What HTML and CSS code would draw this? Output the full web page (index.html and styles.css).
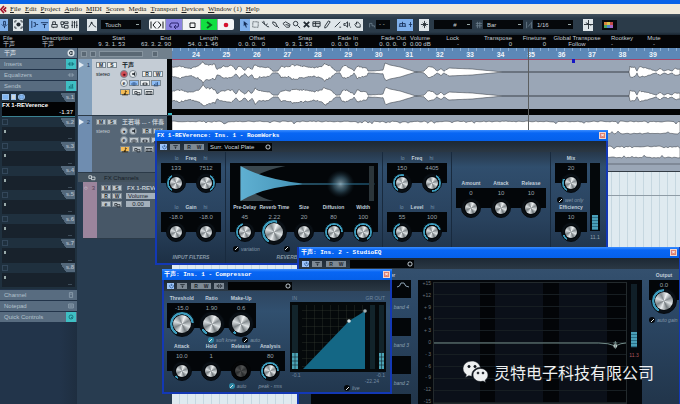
FILE: index.html
```html
<!DOCTYPE html>
<html lang="zh-CN">
<head>
	<meta charset="utf-8">
	<title>Project</title>
	<link rel="stylesheet" href="styles.css">
</head>
<body>
	<svg class="defs" aria-hidden="true">
		<symbol id="i-power" viewBox="0 0 10 8"><path d="M3.5 2.2a2.4 2.4 0 1 0 3 0M5 1v3"/></symbol>
		<symbol id="i-bypass" viewBox="0 0 10 8"><path d="M2 2h6M3.5 4h3M5 4v2.500"/></symbol>
		<symbol id="i-eq" viewBox="0 0 10 8"><path d="M1 4h8M3 2.500h4M3 5.500h4"/></symbol>
		<symbol id="i-bars" viewBox="0 0 10 8"><path d="M2 6.500h6M3 6V4M5 6V2M7 6V1.500"/></symbol>
		<symbol id="i-env" viewBox="0 0 10 8"><path d="M1 4h8M4 1.500L2.500 4 4 6.500M6 1.500L7.500 4 6 6.500"/></symbol>
		<symbol id="i-folder" viewBox="0 0 10 8"><path d="M2 2h3v1.500h4v3H5V3.500M2 2v3h3"/></symbol>
		<symbol id="i-keys" viewBox="0 0 10 8"><path d="M1 2h8v4H1zM3.500 2v4M6.500 2v4"/></symbol>
		<symbol id="i-note" viewBox="0 0 10 8"><path d="M5.500 1v5M5.500 1l2 1.500M1 6.500h8"/><circle cx="4.500" cy="5.500" r="1.200" class="solid"/></symbol>
		<symbol id="i-speaker" viewBox="0 0 10 8"><path class="solid" d="M2.500 3h2l2-2v6l-2-2h-2z"/></symbol>
	</svg>

	<div class="app_title"></div>
	<nav class="menu">
		<svg class="logo" viewBox="0 0 8 8"><path d="M4.500 0L1 4l3.500 4M7 1.500L4.500 4 7 6.500" /></svg>
		<a href="#"><u>F</u>ile</a><a href="#"><u>E</u>dit</a><a href="#"><u>P</u>roject</a><a href="#"><u>A</u>udio</a><a href="#"><u>M</u>IDI</a><a href="#"><u>S</u>cores</a><a href="#">M<u>e</u>dia</a><a href="#"><u>T</u>ransport</a><a href="#"><u>D</u>evices</a><a href="#"><u>W</u>indow (1)</a><a href="#"><u>H</u>elp</a>
	</nav>

	<div class="toolbar">
		<div class="group"><button class="tool on narrow" aria-label="Activate"><svg viewBox="0 0 10 10"><path d="M4 1.500h2v4H4zM2 5q3 4 6 0M5 7v2"/></svg></button></div>
		<div class="group"><button class="tool" aria-label="Constrain"><svg viewBox="0 0 10 10"><path d="M3 1H1v2M7 1h2v2M3 9H1V7M7 9h2V7"/><circle class="solid" cx="5" cy="5" r="2.300"/></svg></button></div>
		<div class="group">
			<button class="tool on" aria-label="Inspector"><svg viewBox="0 0 10 10"><path d="M2 1v8M4 3h2v4H4M7 5h2"/></svg></button>
			<button class="tool on" aria-label="Info line"><svg viewBox="0 0 10 10"><path d="M1 3h8M3 5h4M5 5v4"/></svg></button>
			<button class="tool" aria-label="Overview"><svg viewBox="0 0 10 10"><path d="M3 5V2h3v3M2 5h6v3H2zM4 8v1"/></svg></button>
			<button class="tool" aria-label="Pool"><svg viewBox="0 0 10 10"><path d="M1 2h3v3H1zM5 2h4v2H5zM5 6h4v3H5zM2 5v3h3"/></svg></button>
			<button class="tool" aria-label="Mixer"><svg viewBox="0 0 10 10"><path d="M2.500 1v8M5 1v8M7.500 1v8M1.500 6h2M4 3h2M6.500 6h2"/></svg></button>
		</div>
		<div class="group"><button class="tool" aria-label="Automation"><svg viewBox="0 0 10 10"><path d="M1 8l3-5 2 3 3 2"/><circle class="solid" cx="4" cy="3" r="1"/></svg></button></div>
		<div class="group"><select class="picker touch" aria-label="Automation mode"><option>Touch</option></select></div>
		<div class="group transport">
			<button class="key" aria-label="Locators"><svg viewBox="0 0 16 10"><path d="M2 1.500v7M7 1.500L4 5l3 3.500M9 1.500L12 5 9 8.500M14 1.500v7"/></svg></button>
			<button class="key cycle" aria-label="Cycle"><svg viewBox="0 0 16 10"><path d="M6 7H4q-1-2 1-4h7q1 2 0 4H8M10 5L8 7l2 2"/></svg></button>
			<button class="key" aria-label="Stop"><svg viewBox="0 0 16 10"><path d="M6 3h5v4.500H6z"/></svg></button>
			<button class="key play" aria-label="Play"><svg viewBox="0 0 16 10"><path d="M6 2l4 3-4 3"/></svg></button>
			<button class="key rec" aria-label="Record"><svg viewBox="0 0 16 10"><circle cx="8" cy="5" r="2.300"/></svg></button>
		</div>
		<div class="group tools">
			<button class="tool on" aria-label="Select"><svg viewBox="0 0 10 10"><path class="solid" d="M3 1l5 4H5.500l1 3-1 .5-1.200-3L3 7z"/></svg></button>
			<button class="tool" aria-label="Range"><svg viewBox="0 0 10 10"><path stroke-dasharray="1 1" d="M2 2h6v6H2z"/></svg></button>
			<button class="tool" aria-label="Split"><svg viewBox="0 0 10 10"><path d="M1 2l7 6M3 1l1 4M6 6l1-2M8 7l1 1"/></svg></button>
			<button class="tool" aria-label="Glue"><svg viewBox="0 0 10 10"><path d="M2 2l3 1 2 4H5L2 4zM7 7l2 2"/></svg></button>
			<button class="tool" aria-label="Erase"><svg viewBox="0 0 10 10"><path d="M1 4l3-2 5 3-1 3H5zM4 5l4 1"/></svg></button>
			<button class="tool" aria-label="Zoom"><svg viewBox="0 0 10 10"><circle cx="4" cy="4" r="2.500"/><path d="M6 6l3 3"/></svg></button>
			<button class="tool" aria-label="Mute"><svg viewBox="0 0 10 10"><path class="thick" d="M2 2l6 6M8 2L2 8"/></svg></button>
			<button class="tool" aria-label="Time warp"><svg viewBox="0 0 10 10"><path d="M1 2h8v5H1zM1 4h8M4 2v5M7 7v2"/></svg></button>
			<button class="tool" aria-label="Draw"><svg viewBox="0 0 10 10"><path d="M6 1l2 1-4 6-2 1V7z"/></svg></button>
			<button class="tool" aria-label="Line"><svg viewBox="0 0 10 10"><path d="M2 8l6-6M7 8h2"/></svg></button>
			<button class="tool" aria-label="Play tool"><svg viewBox="0 0 10 10"><path d="M1 4h2l2-2v6L3 6H1zM7 3v4M8 8h1"/></svg></button>
			<button class="tool" aria-label="Color"><svg viewBox="0 0 10 10"><path d="M2 5l3-3 3 3v3H4zM4 2v3"/></svg></button>
		</div>
		<div class="group"><svg class="dim" viewBox="0 0 10 10"><path d="M2 8V3h3v3h3v2"/></svg><span class="readout">- -</span></div>
		<div class="group"><button class="tool on" aria-label="Autoscroll"><svg viewBox="0 0 10 10"><path d="M1 7h8M5 2v5M2 4h6v3M2 4v3"/></svg></button><button class="tool on half" aria-label="Suspend"><svg viewBox="0 0 6 10"><path d="M3 2v6M1 5h4"/></svg></button></div>
		<div class="group"><button class="tool" aria-label="Snap zero"><svg viewBox="0 0 10 10"><path d="M5 1v8M1 5h8M3 3l4 4M7 3L3 7"/></svg></button></div>
		<div class="group"><select class="picker snap" aria-label="Snap type"><option>#</option></select></div>
		<div class="group"><svg class="dim" viewBox="0 0 10 10"><path d="M1 3h8M1 6h8M3 1v8M6 1v8"/></svg><select class="picker" aria-label="Grid type"><option>Bar</option></select></div>
		<div class="group"><svg class="dim" viewBox="0 0 10 10"><path d="M2 1v8M8 1v8M4 7l3-4"/></svg><select class="picker" aria-label="Quantize"><option>1/16</option></select></div>
		<div class="group"><button class="tool" aria-label="Quantize on"><svg viewBox="0 0 10 10"><path d="M5 0v10M0 5h10M2 3l6 3"/></svg></button></div>
		<div class="group"><span class="swatches"><i></i><i></i><i></i><i></i><i></i><i></i></span></div>
	</div>

	<div class="info">
		<div class="left">File<br>干声</div><div class="left">Description<br>干声</div>
		<div>Start<br>9. 3. 1. 53</div><div>End<br>63. 3. 2. 90</div><div>Length<br>54. 0. 1. 46</div>
		<div>Offset<br>0. 0. 0. &nbsp; 0</div><div>Snap<br>9. 3. 1. 53</div><div>Fade In<br>0. 0. 0. &nbsp; 0</div><div>Fade Out<br>0. 0. 0. &nbsp; 0</div>
		<div class="left">Volume<br>0.00 dB</div><div>Lock<br>-</div><div>Transpose<br>0</div><div>Finetune<br>0</div>
		<div class="mid">Global Transpose<br>Follow</div><div class="left">Rootkey<br>-</div><div class="mid">Mute<br>-</div>
	</div>

	<main class="work">
		<aside class="inspector">
			<div class="row head"><span>干声</span><svg viewBox="0 0 8 8"><circle cx="4" cy="4" r="3.500" class="disc"/><path d="M5.500 2.500q-3-1-3 1.500t3 1.500M4 4h2"/></svg></div>
			<div class="row"><span>Inserts</span><svg class="lit" viewBox="0 0 10 8"><use href="#i-env"/></svg></div>
			<div class="row"><span>Equalizers</span><svg viewBox="0 0 10 8"><use href="#i-env"/></svg></div>
			<div class="row"><span>Sends</span><svg class="lit" viewBox="0 0 10 8"><use href="#i-bars"/></svg></div>
			<div class="sends">
				<div class="slot used"><div class="bar"><span class="chips"><i></i><i></i><i></i></span><em>s.1</em></div><div class="box"><b>FX 1-REVerence</b><span>-1.37</span></div></div>
				<div class="slot"><div class="bar"><i></i><em>s.2</em></div><div class="box"></div></div>
				<div class="slot"><div class="bar"><i></i><em>s.3</em></div><div class="box"></div></div>
				<div class="slot"><div class="bar"><i></i><em>s.4</em></div><div class="box"></div></div>
				<div class="slot"><div class="bar"><i></i><em>s.5</em></div><div class="box"></div></div>
				<div class="slot"><div class="bar"><i></i><em>s.6</em></div><div class="box"></div></div>
				<div class="slot"><div class="bar"><i></i><em>s.7</em></div><div class="box"></div></div>
				<div class="slot"><div class="bar"><i></i><em>s.8</em></div><div class="box"></div></div>
			</div>
			<div class="row"><span>Channel</span><svg viewBox="0 0 10 8"><path d="M3 1h4v6H3zM4 3h2"/></svg></div>
			<div class="row"><span>Notepad</span><svg viewBox="0 0 10 8"><path d="M2 1.500h6v5H2zM3 3h4M3 5h4"/></svg></div>
			<div class="row"><span>Quick Controls</span><svg class="lit" viewBox="0 0 10 8"><circle cx="5" cy="4" r="2.500"/><path d="M5 4l2 2"/></svg></div>
		</aside>

		<section class="tracks">
			<div class="list_head"><i></i><i></i><i class="wide"></i><i></i></div>
			<div class="track selected">
				<div class="strip"><span class="arrow"></span>1</div>
				<div class="panel">
					<div class="line"><button>M</button><button>S</button><b>干声</b></div>
					<div class="line"><small>stereo</small><button class="round red" aria-label="Record">●</button><button class="round" aria-label="Monitor"><svg viewBox="0 0 10 8"><use href="#i-speaker"/></svg></button><button class="push">R</button><button>W</button></div>
					<div class="line in"><button class="round">e</button><button class="blue" aria-label="Inserts"><svg viewBox="0 0 10 8"><use href="#i-eq"/></svg></button><button aria-label="EQ"><svg viewBox="0 0 10 8"><use href="#i-env"/></svg></button><button class="blue" aria-label="Sends"><svg viewBox="0 0 10 8"><use href="#i-bars"/></svg></button></div>
					<div class="line in spaced"><button class="gold" aria-label="Time base"><svg viewBox="0 0 10 8"><use href="#i-note"/></svg></button><button aria-label="Lock"><svg viewBox="0 0 10 8"><use href="#i-folder"/></svg></button><button aria-label="Lanes"><svg viewBox="0 0 10 8"><use href="#i-keys"/></svg></button></div>
				</div>
				<div class="meter"></div>
			</div>
			<div class="track">
				<div class="strip"><span class="arrow"></span>2</div>
				<div class="panel">
					<div class="line"><button>M</button><button>S</button><b>王若琳 ... - 伴奏</b></div>
					<div class="line"><small>stereo</small><button class="round" aria-label="Record">●</button><button class="round" aria-label="Monitor"><svg viewBox="0 0 10 8"><use href="#i-speaker"/></svg></button><button class="push">R</button><button>W</button></div>
					<div class="line in"><button class="round">e</button><button aria-label="Inserts"><svg viewBox="0 0 10 8"><use href="#i-eq"/></svg></button><button aria-label="EQ"><svg viewBox="0 0 10 8"><use href="#i-env"/></svg></button><button aria-label="Sends"><svg viewBox="0 0 10 8"><use href="#i-bars"/></svg></button></div>
					<div class="line in spaced"><button class="gold" aria-label="Time base"><svg viewBox="0 0 10 8"><use href="#i-note"/></svg></button><button aria-label="Lock"><svg viewBox="0 0 10 8"><use href="#i-folder"/></svg></button><button aria-label="Lanes"><svg viewBox="0 0 10 8"><use href="#i-keys"/></svg></button></div>
				</div>
				<div class="meter"></div>
			</div>
			<div class="folder"><svg viewBox="0 0 10 8"><use href="#i-folder"/></svg>FX Channels</div>
			<div class="track fx">
				<div class="strip"><span>○</span>3</div>
				<div class="panel">
					<div class="line"><button>M</button><button>S</button><b>FX 1-REVerence</b></div>
					<div class="line"><button>R</button><button>W</button><span class="field">Volume</span></div>
					<div class="line"><button>e</button><button aria-label="Lock"><svg viewBox="0 0 10 8"><use href="#i-folder"/></svg></button><span class="field short">0.00</span></div>
				</div>
			</div>
		</section>

		<section class="arrange">
			<div class="ruler"><span>24</span><span>25</span><span>26</span><span>27</span><span>28</span><span>29</span><span>30</span><span>31</span><span>32</span><span>33</span><span>34</span><span>35</span><span>36</span><span>37</span><span>38</span><span>39</span></div>
			<div class="lane"><svg id="wave1" viewBox="0 0 508 49"></svg></div>
			<div class="lane second"><svg id="wave2" viewBox="0 0 508 57"></svg></div>
			<div class="empty"></div>
			<div class="cursor"></div>
			<div class="marker"></div>
		</section>
	</main>

	<section class="window room">
		<header>FX 1-REVerence: Ins. 1 - RoomWorks<button class="close" aria-label="Close">×</button></header>
		<div class="plugbar"><button class="on" aria-label="Power"><svg viewBox="0 0 10 8"><use href="#i-power"/></svg></button><button aria-label="Bypass"><svg viewBox="0 0 10 8"><use href="#i-bypass"/></svg></button><span class="rw"><button>R</button><button>W</button></span><select class="preset" aria-label="Preset"><option>Surr. Vocal Plate</option></select></div>
		<div class="room_body">
			<div class="col">
				<div class="caption"><span>lo</span><b>Freq</b><span>hi</span></div>
				<div class="bank bare"><label class="cell"><output>133</output><input type="range" class="knob" value="40" aria-label="Low freq"></label><label class="cell"><output>7512</output><input type="range" class="knob rev" value="40" aria-label="High freq"></label></div>
				<div class="caption low"><span>lo</span><b>Gain</b><span>hi</span></div>
				<div class="bank bare"><label class="cell"><output>-18.0</output><input type="range" class="knob" value="0" aria-label="Low gain"></label><label class="cell"><output>-18.0</output><input type="range" class="knob" value="0" aria-label="High gain"></label></div>
				<div class="foot">INPUT FILTERS</div>
			</div>
			<div class="col reverb">
				<div class="black">
					<svg class="decay" viewBox="0 0 147 41">
						<defs>
							<linearGradient id="dg"><stop offset="0" stop-color="#5fb0d2"/><stop offset="1" stop-color="#256f94"/></linearGradient>
							<radialGradient id="glow"><stop offset="0" stop-color="#9dbac8" stop-opacity=".8"/><stop offset=".5" stop-color="#4f7a90" stop-opacity=".5"/><stop offset="1" stop-color="#1c3542" stop-opacity="0"/></radialGradient>
						</defs>
						<path fill="#3a474e" d="M10 3h45Q28 8 13 21q10 12 30 17H10z"/>
						<path fill="url(#dg)" d="M10 3Q32 16 72 20.500h72v1H72Q32 24 10 38z"/>
						<circle cx="110" cy="21" r="14" fill="url(#glow)"/>
						<path stroke="#2b353a" stroke-width="5" d="M141 3v35"/>
					</svg>
					<div class="bank clear"><label class="cell"><b>Pre-Delay</b><output>45</output><input type="range" class="knob" value="45"></label><label class="cell"><b>Reverb Time</b><output>2.22</output><input type="range" class="knob big" value="55"></label><label class="cell"><b>Size</b><output>20</output><input type="range" class="knob" value="0"></label><label class="cell"><b>Diffusion</b><output>80</output><input type="range" class="knob" value="80"></label><label class="cell"><b>Width</b><output>100</output><input type="range" class="knob" value="100"></label></div>
				</div>
				<div class="checks"><label><input type="checkbox">variation</label><input type="checkbox" aria-label="Hold"></div>
				<div class="foot">REVERB</div>
			</div>
			<div class="col">
				<div class="caption"><span>lo</span><b>Freq</b><span>hi</span></div>
				<div class="bank bare"><label class="cell"><output>150</output><input type="range" class="knob" value="55" aria-label="Low freq"></label><label class="cell"><output>4405</output><input type="range" class="knob rev" value="50" aria-label="High freq"></label></div>
				<div class="caption low"><span>lo</span><b>Level</b><span>hi</span></div>
				<div class="bank bare"><label class="cell"><output>55</output><input type="range" class="knob" value="45" aria-label="Low level"></label><label class="cell"><output>100</output><input type="range" class="knob" value="75" aria-label="High level"></label></div>
			</div>
			<div class="col gate">
				<div class="bank"><label class="cell"><b>Amount</b><output>0</output><input type="range" class="knob" value="0"></label><label class="cell"><b>Attack</b><output>10</output><input type="range" class="knob" value="0"></label><label class="cell"><b>Release</b><output>10</output><input type="range" class="knob" value="0"></label></div>
			</div>
			<div class="col out">
				<div>
					<div class="bank"><label class="cell"><b>Mix</b><output>20</output><input type="range" class="knob" value="30"></label></div>
					<div class="checks wet"><label><input type="checkbox">wet only</label></div>
					<div class="bank"><label class="cell"><b>Efficiency</b><output>10</output><input type="range" class="knob" value="12"></label></div>
				</div>
				<div class="level"><span class="tube"><i></i></span>11.1</div>
			</div>
		</div>
	</section>

	<section class="window studio">
		<header>干声: Ins. 2 - StudioEQ<button class="close" aria-label="Close">×</button></header>
		<div class="plugbar"><button class="on" aria-label="Power"><svg viewBox="0 0 10 8"><use href="#i-power"/></svg></button><button aria-label="Bypass"><svg viewBox="0 0 10 8"><use href="#i-bypass"/></svg></button><span class="rw"><button>R</button><button>W</button></span><select class="preset" aria-label="Preset"><option></option></select></div>
		<div class="eq_body">
			<div class="bands"><b>Filter</b>
				<div class="band"><svg viewBox="0 0 12 6"><path d="M0 5q3 0 4-4h3q1 4 5 4"/></svg><span>band 4</span></div>
				<div class="band"><span>band 3</span></div>
				<div class="band"><span>band 2</span></div>
				<div class="band wide"></div>
			</div>
			<div class="graph">
				<div class="scale"><span>+15</span><span>+12</span><span>+ 9</span><span>+ 6</span><span>+ 3</span><span>0</span><span>- 3</span><span>- 6</span><span>- 9</span><span>-12</span><span>-15</span></div>
				<div class="plot"><svg viewBox="0 0 198 20"><path d="M0 10h170q10 0 17 3 6-3 11-3" /><circle cx="187" cy="13" r="2"/><path d="M185 10h4M187 8v8"/></svg></div>
				<div class="level red_text"><span class="tube"><i></i></span>11.3</div>
			</div>
			<div class="output">
				<div class="bank"><label class="cell"><b>Output</b><output>0.0</output><input type="range" class="knob big" value="50"></label></div>
				<div class="checks"><label><input type="checkbox">auto gain</label></div>
			</div>
		</div>
	</section>

	<section class="window comp">
		<header>干声: Ins. 1 - Compressor<button class="close" aria-label="Close">×</button></header>
		<div class="plugbar"><button class="on" aria-label="Power"><svg viewBox="0 0 10 8"><use href="#i-power"/></svg></button><button aria-label="Bypass"><svg viewBox="0 0 10 8"><use href="#i-bypass"/></svg></button><span class="rw"><button>R</button><button>W</button></span><button aria-label="Side chain"><svg viewBox="0 0 10 8"><use href="#i-env"/></svg></button><select class="preset" aria-label="Preset"><option></option></select></div>
		<div class="comp_body">
			<div class="dials">
				<div class="bank tall"><label class="cell"><b>Threshold</b><output>-15.0</output><input type="range" class="knob big" value="78"></label><label class="cell"><b>Ratio</b><output>1.90</output><input type="range" class="knob big" value="10"></label><label class="cell"><b>Make-Up</b><output>0.6</output><input type="range" class="knob big" value="4"></label></div>
				<div class="checks"><label><input type="checkbox" checked>soft knee</label><label><input type="checkbox">auto</label></div>
				<div class="bank"><label class="cell"><b>Attack</b><output>10.0</output><input type="range" class="knob" value="8"></label><label class="cell"><b>Hold</b><output>1</output><input type="range" class="knob" value="0"></label><label class="cell"><b>Release</b><output>&nbsp;</output><input type="range" class="knob off" value="0"></label><label class="cell"><b>Analysis</b><output>80</output><input type="range" class="knob" value="80"></label></div>
				<div class="checks"><label><input type="checkbox" checked>auto</label><span>peak - rms</span></div>
			</div>
			<div class="curve">
				<div class="ends"><span>IN</span><span>GR OUT</span></div>
				<svg viewBox="0 0 96 70">
					<defs><pattern id="grid" width="8" height="8" patternUnits="userSpaceOnUse"><path d="M8 0H0v8" fill="none" stroke="#343a31" stroke-width=".7"/></pattern></defs>
					<path fill="#05090b" d="M0 0h96v70H0z"/>
					<path fill="#12242b" d="M2 3h6v64H2zM80 3h5v64h-5zM89 3h5v64h-5z"/>
					<path fill="url(#grid)" d="M12 3h63v64H12z"/>
					<path fill="#146785" d="M13 67L59 19l16-10v58z"/>
					<path fill="#4ba3b5" d="M2 51h6v16H2zM89 51h5v16h-5z"/>
					<path stroke="#12242b" stroke-width=".6" d="M5 51v16M91.500 51v16M2 55h6M2 59h6M2 63h6M89 55h5M89 59h5M89 63h5"/>
					<circle cx="59" cy="19" r="1.800" fill="#d8e3e4"/><circle cx="75" cy="9" r="1.800" fill="#9fb0b4"/>
				</svg>
				<div class="ends"><span>-0.1</span><span>-0.1</span></div>
				<div class="ends right">-22.24</div>
				<div class="checks live"><label><input type="checkbox">live</label></div>
			</div>
		</div>
	</section>

	<div class="watermark">
		<svg viewBox="0 0 27 24"><path d="M10 1C4.500 1 1 4.500 1 8.700c0 2.500 1.300 4.500 3.300 5.900L3.500 17.500l3.300-1.700c1 .3 2 .4 3.200.4-1-5.500 4-9 8.500-8.800C17.500 3.500 14 1 10 1z"/><path d="M18.500 8.500c-4.300 0-7.500 3-7.500 6.500s3.200 6.500 7.500 6.500c.9 0 1.800-.1 2.600-.4l2.700 1.500-.7-2.400c1.800-1.200 2.900-3.100 2.900-5.200 0-3.500-3.300-6.500-7.500-6.500z"/><g><circle cx="7" cy="6.500" r="1.200"/><circle cx="13" cy="6.500" r="1.200"/><circle cx="16" cy="13" r="1"/><circle cx="21" cy="13" r="1"/></g></svg>
		灵特电子科技有限公司
	</div>
	<script src="script.js"></script>
</body>
</html>
```
FILE: styles.css
```css
* { box-sizing: border-box; }
body { margin: 0; height: 100vh; display: flex; flex-direction: column; position: relative; overflow: hidden; background: #283c50; color: #c3ccd3; font: 6px/6px "Liberation Sans", "Noto Sans CJK SC", sans-serif; }
button, select, input { font: inherit; margin: 0; padding: 0; border: 0; }
select { appearance: none; }
svg { display: block; fill: none; stroke: currentColor; overflow: visible; }
.solid { fill: currentColor; stroke: none; }
.defs { position: absolute; width: 0; height: 0; }

.app_title { height: 4px; background: #0963e8; flex: none; }
.menu { display: flex; gap: 4px; height: 10px; flex: none; align-items: center; background: #f0eadb; font: 7px/9px "Liberation Serif", serif; }
.menu a { color: #222; text-decoration: none; white-space: nowrap; }
.logo { width: 7px; height: 7px; color: #a3122c; stroke-width: 2; margin-right: -1px; }

/* toolbar */
.toolbar { display: grid; grid-template-columns: 13px 16px 58px 14px 48px 91px 128px 29px 22px 15px 41px 50px 58px 19px 1fr; height: 21px; flex: none; align-items: center; background: linear-gradient(#43525f, #2b3b49 4px, #2b3b49 18px, #18242f); }
.group { display: flex; align-items: center; }
.tool { width: 10px; height: 12px; background: #dfe6ea; color: #222b33; display: grid; place-items: center; }
.tool svg { width: 9px; height: 9px; }
.tool.narrow { width: 8px; }
.tool.half { width: 6px; }
.tool.half svg { width: 5px; }
.tool.on { background: #7fb0ec; color: #16305a; }
.tools .tool:nth-child(4n) { width: 11px; }
.thick { stroke-width: 2; }
.picker { width: 40px; height: 9px; padding-left: 4px; background: #05080b linear-gradient(#9aa, #9aa) no-repeat right 2px center / 3px 1px; color: #c8d0d4; }
.picker.snap { width: 38px; text-align: center; }
.dim { width: 8px; height: 8px; color: #6f8191; }
.readout { width: 14px; height: 9px; padding: 1px 3px; background: #05080b; }
.transport { border-radius: 2px; overflow: hidden; width: 85px; }
.key { flex: 18 0 0; height: 11px; background: #f2f4f5; color: #15181b; display: grid; place-items: center; border-right: 1px solid #99a4ac; }
.key svg { width: 16px; height: 10px; stroke-width: 1; }
.key.cycle { background: #8a83e0; color: #2a2470; }
.key.play { background: #12e042; color: #07651c; }
.key.play svg { stroke-width: 2; }
.key.rec { color: #d5122e; border: 0; }
.key.rec svg { fill: #d5122e; stroke: none; }
.swatches { display: grid; grid-template-columns: repeat(3, 3px); grid-auto-rows: 3px; padding: 2px; width: 15px; background: #05080b; }
.swatches i { background: #d9853c; }
.swatches i:nth-child(2) { background: #d8c34c; }
.swatches i:nth-child(3) { background: #c34b45; }
.swatches i:nth-child(4) { background: #4ea45c; }
.swatches i:nth-child(5) { background: #4e83d0; }
.swatches i:nth-child(6) { background: #a367c4; }

.info { display: grid; grid-template-columns: 39px 44px 39px 46px 47px 47px 47px 46px 48px 37px 16px 53px 34px 62px 30px 1fr; height: 13px; flex: none; padding-left: 3px; background: #040507; text-align: right; white-space: nowrap; }
.info .left { text-align: left; }
.info div:nth-child(10) { padding-left: 4px; }
.info div:nth-child(15) { padding-left: 3px; }
.info .mid { text-align: center; }
.info div:last-child { padding-right: 10px; }

.work { flex: 1; display: flex; min-height: 0; }

/* inspector */
.inspector { width: 77px; flex: none; background: linear-gradient(90deg, #22344a 60px, #1e2e40); display: flex; flex-direction: column; gap: 1px; }
.row { height: 10px; display: flex; align-items: center; justify-content: space-between; padding: 0 1px 0 4px; background: #586c80; color: #b4c2cd; flex: none; }
.row svg { width: 10px; height: 10px; color: #8fa1b0; padding: 1px; stroke-width: 1; }
.row .lit { background: #3fbfc4; color: #0e666f; }
.row.head { color: #e4eaee; background: #60768b; }
.disc { fill: #dde4e8; stroke: none; }
.head path { stroke: #26323d; }
.sends { display: grid; grid-auto-rows: 1fr; height: 197px; padding-bottom: 2px; background: #1f303e; }
.slot { display: flex; flex-direction: column; padding-right: 2px; }
.slot .bar { display: flex; justify-content: space-between; align-items: center; height: 10px; flex: none; padding-left: 2px; }
.slot .bar > i { width: 6px; height: 6px; border: 1px solid #33475a; }
.slot em { font-style: normal; font-weight: bold; color: #a9b7c3; background: linear-gradient(55deg, transparent 25%, #53687b 26%); padding: 1px 1px 1px 5px; line-height: 7px; }
.slot .box { flex: 1; margin-left: 2px; background: #18222c linear-gradient(#9aa, #9aa) no-repeat 2px 3px / 2px 3px; position: relative; }
.slot .box::after { content: ""; position: absolute; right: 3px; bottom: 2px; width: 4px; border-top: 1px solid #3d4c59; }
.used .box { background: #020304; border-bottom: 1px solid #3b8292; color: #fff; display: flex; flex-direction: column; line-height: 7px; padding-right: 2px; }
.used .box::after { display: none; }
.used .box b { white-space: nowrap; }
.used .box span { text-align: right; }
.chips { display: flex; gap: 2px; }
.chips i { width: 7px; height: 6px; background: #7fb4ef; border: 1px solid #23415f; outline: 1px solid #9cc3ee; outline-offset: -1px; }
.chips i:nth-child(2) { width: 5px; background: #cfd6da; }
.chips i:nth-child(3) { border-radius: 50%; }

/* track list */
.tracks { width: 95px; flex: none; padding-left: 1px; background: #283c50; }
.list_head { display: flex; gap: 3px; align-items: center; height: 11px; padding: 0 3px; background: #71808d; }
.list_head i { width: 6px; height: 6px; background: #5a6874; border: 1px solid #86949f; }
.list_head .wide { width: 44px; margin-right: 6px; }
.track { display: flex; height: 57px; border-bottom: 1px solid #2b3a48; }
.strip { width: 14px; flex: none; background: #6f8db0; color: #23405f; display: flex; justify-content: space-between; padding: 3px 2px 0 1px; }
.arrow { width: 0; height: 0; border: 3px solid transparent; border-left: 5px solid #e2ebf3; border-right: 0; }
.panel { flex: 1; min-width: 0; padding: 2px 0 0 4px; background: #566676; overflow: hidden; display: flex; flex-direction: column; gap: 2px; }
.selected .panel { background: #c4ccd5; color: #10161c; }
.selected .strip { background: #83a0bc; }
.meter { width: 5px; background: #04070a linear-gradient(#38b8c6, #38b8c6) no-repeat bottom / 4px 2px; }
.line { display: flex; gap: 1px; align-items: center; height: 7px; white-space: nowrap; }
.line.in { padding-left: 24px; }
.line.spaced { gap: 2px; }
.line small { width: 23px; font-size: 5px; flex: none; }
.line b { margin-left: 4px; }
.line button { width: 10px; height: 6px; flex: none; display: grid; place-items: center; background: #e9edef; color: #20272d; border: 1px solid #7b8790; font-size: 5px; line-height: 4px; font-weight: bold; }
.line button svg { width: 8px; height: 6px; stroke-width: 1; }
.line .round { width: 8px; height: 8px; border-radius: 50%; }
.line .push { margin-left: 4px; }
.line .red { background: #cf4d58; color: #5a0710; }
.line .blue { background: #8dbcf4; color: #1e4376; }
.line .gold { background: #f5bd58; color: #3a2500; }
.track:not(.selected) button:not(.gold) { background: #bcc5cc; }
.folder { display: flex; gap: 8px; align-items: center; height: 9px; padding-left: 9px; background: #44535f; color: #172027; }
.folder svg { width: 9px; height: 7px; color: #d5dcdf; }
.fx { margin-left: 5px; background: #46566a; }
.fx .strip { background: #9b849c; color: #53405a; }
.fx .strip span { color: #eee; }
.fx .panel { background: #475767; gap: 1px; }
.field { width: 38px; padding: 0 2px; margin-left: 3px; background: #a4b0bb; color: #1c252d; }
.field.short { width: 24px; text-align: center; }

/* arrangement */
.arrange { flex: 1; min-width: 0; position: relative; display: flex; flex-direction: column; overflow: hidden; }
.ruler { display: flex; height: 12px; flex: none; color: #eef4fa; font-weight: bold; font-size: 7px; background: repeating-linear-gradient(90deg, #8cb0d6 0 1px, transparent 1px 8px) top / 100% 3px no-repeat, #5c88b7; border-bottom: 1px solid #a4476a; }
.ruler span { flex: 0 0 6%; padding-top: 4px; }
.ruler span:first-child { margin-left: 20px; }
.lane { height: 55px; flex: none; background: #9aa6b6; border-bottom: 6px solid #030405; overflow: hidden; }
.lane svg { width: 508px; height: 49px; color: #2d333b; stroke-width: .5; fill: #fff; }
.lane.second { height: 57px; border-bottom: 1px solid #333c45; }
.lane.second svg { height: 57px; }
.empty { flex: 1; background: linear-gradient(#8f9ca6, #8f9ca6) 0 23px / 100% 1px no-repeat, repeating-linear-gradient(90deg, transparent 0 7px, #c6d7e0 7px 8px), #dfeaf0; }
.cursor { position: absolute; left: 356px; top: 0; width: 1px; height: 100%; background: #5c5f60; }
.marker { position: absolute; left: 400px; top: 11px; width: 3px; height: 4px; background: #1617c4; }

/* plug-in windows */
.window { position: absolute; border: 2px solid #1338b5; border-top: 0; background: #2c4663; font-size: 5px; }
.window header { display: flex; justify-content: space-between; align-items: center; height: 11px; flex: none; margin: 0 -2px; padding: 0 2px; background: linear-gradient(#3b8dff, #0866f4 3px, #0560ea); color: #fff; font: bold 6px/10px "Liberation Mono", "Noto Sans CJK SC", monospace; white-space: nowrap; }
.close { width: 7px; height: 7px; line-height: 6px; background: #dc7d6d; color: #fff; border: 1px solid #f2d4cd; display: grid; place-items: center; }
.plugbar { display: flex; align-items: center; gap: 3px; height: 11px; flex: none; padding-left: 3px; background: linear-gradient(#1c2834, #2b3844); }
.plugbar button { width: 10px; height: 6px; background: #7d8994; color: #1b242c; display: grid; place-items: center; font-weight: bold; line-height: 6px; }
.plugbar button svg { width: 9px; height: 6px; }
.plugbar .on { width: 7px; background: #9dc5fa; color: #2a568f; }
.rw { display: flex; margin-left: 1px; }
.preset { width: 64px; height: 8px; padding-left: 2px; background: #030506 radial-gradient(circle 2px, #030506 1px, #b4bdc3 2px, transparent 3px) no-repeat right 1px center / 6px 6px; color: #ced6db; font-size: 6px; margin-left: 1px; }
.room { left: 155px; top: 130px; width: 453px; height: 135px; z-index: 1; }
.studio { left: 297px; top: 247px; width: 384px; bottom: 0; z-index: 2; border-bottom: 0; display: flex; flex-direction: column; overflow: hidden; }
.studio header { margin: 0; }
.comp { left: 162px; top: 269px; width: 230px; height: 125px; z-index: 3; }

.bank { display: flex; background: linear-gradient(#030609, #030609) no-repeat 0 8px / 100% 20px; }
.bank.bare { background-position: 0 0; }
.bank.clear { background: none; }
.bank.tall { background-size: 100% 25px; }
.cell { flex: 1; min-width: 0; display: flex; flex-direction: column; align-items: center; }
.cell b { height: 8px; line-height: 7px; white-space: nowrap; color: #c0ced9; }
.cell output { height: 10px; line-height: 10px; font-size: 6px; color: #99a3aa; }
.knob { --turn: 0deg; appearance: none; width: 20px; height: 20px; flex: none; border: 1px solid #05090d; padding: 3px; border-radius: 50%; background: conic-gradient(from 20deg, #f0f3f4, #858c90, #dfe4e6, #747b7f, #e8ecee, #7c8387, #d8dde0, #858c90, #f0f3f4) content-box, radial-gradient(closest-side, #05090d 78%, transparent 82%), conic-gradient(from 210deg, #3d9cbd var(--turn), #0a1016 0); }
.knob.rev { background: conic-gradient(from 20deg, #f0f3f4, #858c90, #dfe4e6, #747b7f, #e8ecee, #7c8387, #d8dde0, #858c90, #f0f3f4) content-box, radial-gradient(closest-side, #05090d 78%, transparent 82%), conic-gradient(from 30deg, #3d9cbd var(--turn), #0a1016 0); }
.knob.big { width: 26px; height: 26px; margin-top: -2px; }
.knob.off { filter: brightness(.35); }
.knob::-webkit-slider-thumb { appearance: none; width: 1px; height: 1px; opacity: 0; }
.caption { display: flex; justify-content: center; gap: 7px; height: 8px; line-height: 7px; color: #7591a9; }
.caption b { color: #c0ced9; }
.caption.low { margin-top: 11px; }
.checks { display: flex; gap: 6px; align-items: center; height: 8px; color: #8498a9; font-style: italic; white-space: nowrap; }
.checks label { display: flex; gap: 2px; align-items: center; }
.checks input { appearance: none; width: 6px; height: 6px; border-radius: 50%; background: linear-gradient(135deg, transparent 40%, #dfe7ea 40% 60%, transparent 60%) center / 3px 3px no-repeat, #04070a; }
.checks input:checked { background-color: #2e87a5; }
.foot { color: #8899a7; font-style: italic; font-weight: bold; text-align: center; margin-top: auto; padding-bottom: 3px; }

.room_body { display: grid; grid-template-columns: 69px 157px 69px 99px 1fr; grid-template-rows: 100%; height: 111px; background: linear-gradient(#27384a, #304e6d 15px, #29425e 60%, #1d3045); }
.col { padding: 3px 4px 0; border-right: 1px solid #182a3e; display: flex; flex-direction: column; min-width: 0; }
.col:last-child { border: 0; }
.black { background: linear-gradient(#030609, #030609) no-repeat 0 0 / 100% 69px; margin-top: 8px; }
.decay { width: 100%; height: 41px; stroke: none; }
.reverb .big { margin: -3px 0; }
.reverb .clear { height: 38px; }
.reverb .checks { padding: 3px 0 0 3px; gap: 24px; height: 10px; }
.reverb .foot { padding-right: 34px; }
.gate { padding-top: 28px; }
.col.out { flex-direction: row; gap: 3px; }
.out > div:first-child { width: 32px; }
.checks.wet { margin: 3px 0 0 2px; }
.level { width: 10px; padding-top: 8px; color: #93a4b1; text-align: center; }
.tube { display: flex; align-items: flex-end; justify-content: center; height: 68px; background: #04080b; margin-bottom: 3px; padding: 1px 2px; }
.tube i { width: 6px; height: 15px; background: repeating-linear-gradient(#4a9fb8 0 2px, #2a6f88 2px 3px); }

.eq_body { display: flex; flex: 1; min-height: 0; gap: 7px; padding-top: 3px; background: linear-gradient(#34506e, #2c4866 40px, #22364c 130px); }
.bands { width: 112px; padding-left: 80px; }
.bands b { display: block; height: 8px; padding-left: 4px; color: #c0ced9; }
.band { height: 38px; padding: 2px 2px 0 0; background: linear-gradient(#030609, #030609) no-repeat 0 0 / 100% 18px; display: flex; flex-direction: column; align-items: flex-end; color: #8ea3b5; font-style: italic; }
.band.wide { margin-left: -68px; }
.band span { margin: auto 0 8px; }
.band svg { width: 12px; height: 6px; }
.graph { flex: 1; display: flex; margin-top: 8px; gap: 2px; padding: 0 3px; background: #04070b; }
.scale { width: 10px; font-size: 5px; color: #6d767c; text-align: right; display: flex; flex-direction: column; justify-content: space-between; }
.plot { flex: 1; margin-top: 2px; border: 1px solid #232a2d; background: repeating-linear-gradient(transparent 0 11px, #171e22 11px 12px), linear-gradient(90deg, #0b1019 0 24%, #030508 24% 32%, #0b1019 32% 57%, #030508 57% 65%, #0b1019 65% 90%, #030508 90%); }
.plot svg { width: 100%; height: 20px; margin-top: 50px; color: #76908c; stroke-width: 1; }
.plot circle { fill: #bcc7c5; stroke: none; }
.graph .level { padding-top: 4px; width: 10px; }
.graph .tube { height: 64px; background: #101f28; margin: 0 2px 4px; padding: 1px 0; }
.red_text { color: #b0585d; }
.output { width: 30px; }
.output .bank { background-size: 100% 20px; }
.output .checks { margin-top: 2px; }

.comp_body { display: flex; justify-content: space-between; height: 101px; padding: 4px 3px 0 3px; background: linear-gradient(#2e4660, #31506f 20px, #22374e); }
.dials { width: 118px; }
.bank.tall { width: 89px; }
.dials .checks { justify-content: flex-end; height: 6px; padding-right: 25px; }
.dials .checks:last-child { height: 10px; padding-right: 3px; gap: 12px; }
.curve { width: 97px; display: flex; flex-direction: column; }
.curve > svg { width: 96px; height: 70px; stroke: none; }
.ends { display: flex; justify-content: space-between; height: 8px; padding: 0 2px; color: #7389a0; line-height: 7px; }
.ends.right { height: 6px; justify-content: flex-end; line-height: 5px; padding-right: 8px; }
.live { margin-left: 54px; }

.watermark { position: absolute; left: 462px; top: 360px; z-index: 4; display: flex; gap: 5px; align-items: center; color: #eef0f1; font: 16px/24px "Noto Sans CJK SC", sans-serif; white-space: nowrap; }
.watermark svg { width: 27px; height: 24px; fill: #eef0f1; stroke: #10151c; stroke-width: .6; }
.watermark g { fill: #10151c; }
```
FILE: script.js
```js
// [x, half height] pairs of the vocal track
var vocal = [[0,5],[8,7],[18,4],[26,7],[29,9],[31,12],[34,9],[43,8],[45,3],[50,6],[60,7],[64,2],[67,7],[73,2],[76,6],[80,3],[83,9],[87,6],[97,5],[101,1],[106,1],[109,6],[118,6],[120,8],[130,7],[142,5],[150,7],[153,10],[159,6],[164,1],[168,1],[170,6],[174,7],[181,3],[182,1],[185,7],[195,4],[196,1],[211,2],[213,9],[218,7],[228,5],[244,0],[252,1],[256,6],[261,5],[265,1],[269,4],[272,1],[276,4],[300,3],[331,0],[457,0],[458,6],[463,5],[465,1],[467,6],[473,5],[484,1],[488,4],[492,1],[496,3],[500,1],[503,4],[508,3]];
var seed = 7;

function rnd()
{
	seed = (seed * 16807) % 2147483647;
	return seed / 2147483647;
}

function heightAt(x)
{
	for(var i = 1; i < vocal.length; i++) {
		if(x <= vocal[i][0]) {
			var a = vocal[i - 1], b = vocal[i];
			return a[1] + (b[1] - a[1]) * (x - a[0]) / (b[0] - a[0]);
		}
	}
	return 0;
}

function shape(top, bottom)
{
	return '<path d="M' + top.concat(bottom.reverse()).join('L') + 'Z"/>';
}

function drawVocal(mid)
{
	var top = [], bottom = [];
	for(var x = 0; x <= 508; x++) {
		var h = heightAt(x);
		var n = (x > 213 && x < 244) || (x > 276 && x < 457) ? 0 : h * 0.25;
		top.push(x + ' ' + (mid - h + rnd() * n).toFixed(1));
		bottom.push(x + ' ' + (mid + h - rnd() * n).toFixed(1));
	}
	return shape(top, bottom);
}

function drawBacking(y1, y2)
{
	var top = [], bottom = [];
	for(var x = 0; x <= 508; x += 2) {
		var k = rnd() > 0.85 ? 3 : 1;
		top.push(x + ' ' + (y1 + rnd() * k).toFixed(1));
		bottom.push(x + ' ' + (y2 - rnd() * k).toFixed(1));
	}
	return shape(top, bottom);
}

document.getElementById('wave1').innerHTML = drawVocal(12) + drawVocal(36);
document.getElementById('wave2').innerHTML = drawBacking(6, 19) + drawBacking(31, 43) + '<path d="M0 49h508"/>';

function turn(knob)
{
	knob.style.setProperty('--turn', knob.value * 3 + 'deg');
}

var knobs = document.querySelectorAll('.knob');
for(var i = 0; i < knobs.length; i++) {
	turn(knobs[i]);
	knobs[i].addEventListener('input', function() { turn(this); });
}
```
